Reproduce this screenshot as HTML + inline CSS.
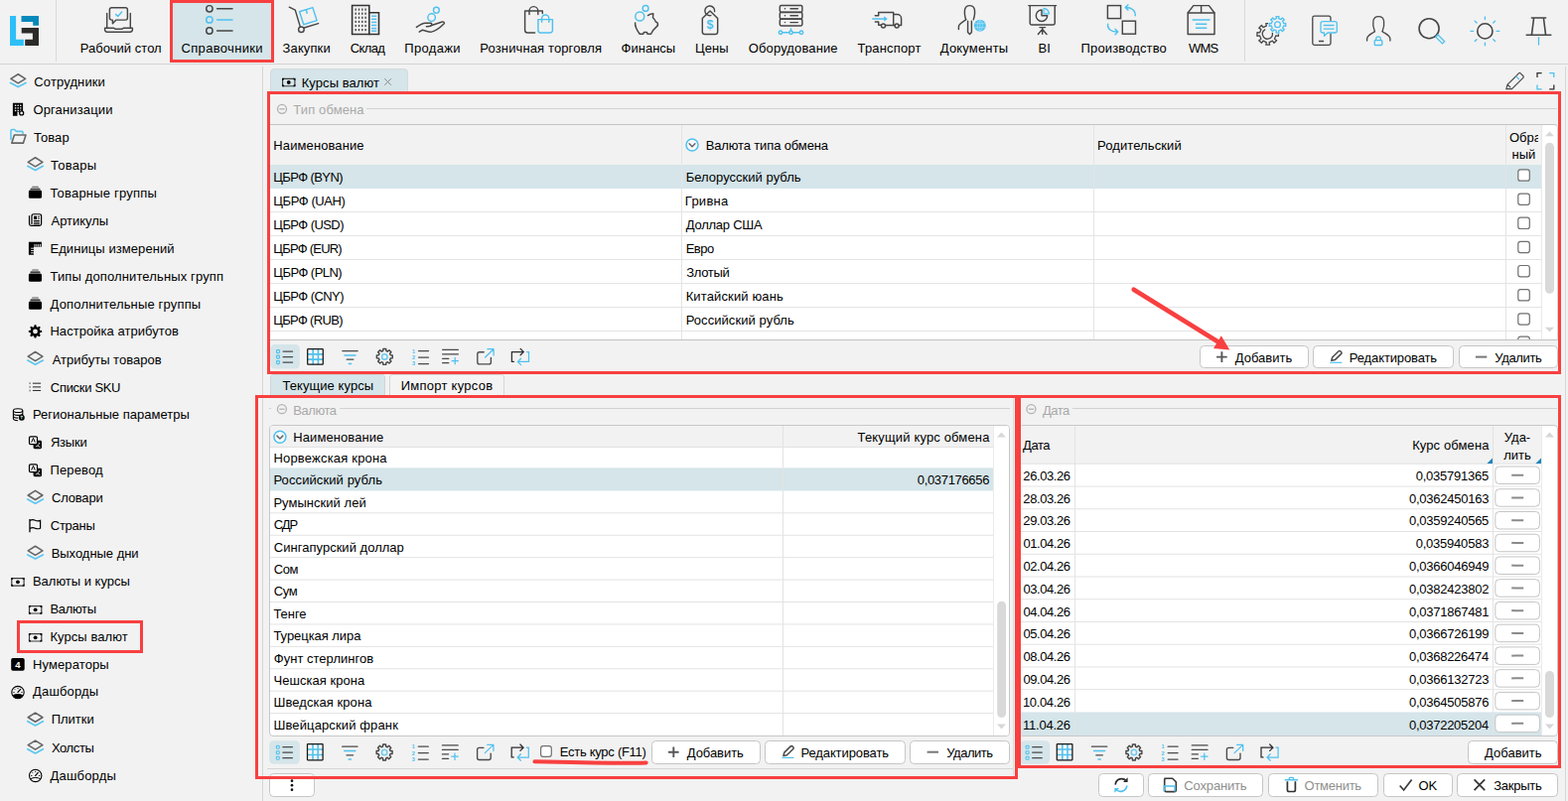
<!DOCTYPE html>
<html lang="ru"><head><meta charset="utf-8"><title>Курсы валют</title>
<style>
html,body{margin:0;padding:0}
body{width:1579px;height:807px;background:#f2f2f2;position:relative;overflow:hidden;font:13px/16px "Liberation Sans","DejaVu Sans",sans-serif;color:#000}
div,svg{position:absolute;box-sizing:border-box}
.w{position:absolute;left:0;top:0;width:0;height:0;margin:0;padding:0;display:block}
svg{overflow:visible}
.t{white-space:nowrap}
.g{color:#a9a9a9}
.dis{color:#8f8f8f}
.btn{background:#fff;border:1px solid #c6c6c6;border-radius:4.5px}
.red{border:3px solid #f84040}
.hl{background:#d5e5ea}
.ov{left:0;top:0;pointer-events:none}
</style></head>
<body>
<!-- top bar -->
<header class="w">
<div style="left:0px;top:64px;width:1579px;height:1px;background:#d3d3d3"></div><div style="left:56px;top:0px;width:1px;height:62px;background:#dadada"></div><div style="left:1253px;top:0px;width:1px;height:62px;background:#dadada"></div><div class="red hl" style="left:171px;top:0px;width:105px;height:63px;"></div><div class="t" style="left:80.83px;top:40.8px;letter-spacing:0.024px;">Рабочий стол</div>
<div class="t" style="left:182.54px;top:40.8px;letter-spacing:0.321px;">Справочники</div>
<div class="t" style="left:284.57px;top:40.8px;letter-spacing:0.120px;">Закупки</div>
<div class="t" style="left:352.74px;top:40.8px;letter-spacing:-0.635px;">Склад</div>
<div class="t" style="left:407.35px;top:40.8px;letter-spacing:0.327px;">Продажи</div>
<div class="t" style="left:483.33px;top:40.8px;letter-spacing:0.121px;">Розничная торговля</div>
<div class="t" style="left:625.55px;top:40.8px;letter-spacing:0.012px;">Финансы</div>
<div class="t" style="left:699.93px;top:40.8px;letter-spacing:0.133px;">Цены</div>
<div class="t" style="left:753.78px;top:40.8px;letter-spacing:0.125px;">Оборудование</div>
<div class="t" style="left:863.51px;top:40.8px;letter-spacing:0.175px;">Транспорт</div>
<div class="t" style="left:946.80px;top:40.8px;letter-spacing:0.161px;">Документы</div>
<div class="t" style="left:1045.53px;top:40.8px;">BI</div>
<div class="t" style="left:1088.55px;top:40.8px;letter-spacing:0.140px;">Производство</div>
<div class="t" style="left:1196.94px;top:40.8px;letter-spacing:-0.808px;">WMS</div>
<svg class="ov" width="1579" height="66" viewBox="0 0 1579 66"><path d="M10 16h6.100v23.800h7.800v6.200H10z" fill="#2ebff8"/><path d="M21.500 16H39v9.800h-5.800v-3.700H21.500z" fill="#0789bc"/><path d="M21.700 28H39v18H25.200v-6.200h7.700v-6.200H21.700z" fill="#2c2b29"/><g fill="none" stroke="#464646" stroke-width="1.45" stroke-linecap="round" stroke-linejoin="round"><path d="M107.7 13.5v14.3M131.3 13.5v14.3"/><path d="M105.6 28.2h8.8l1.6 1h7l1.6-1h8.8v1.6a2.4 2.4 0 0 1-2.4 2.4h-23a2.4 2.4 0 0 1-2.4-2.4z"/><path d="M112.4 7.8h14a2 2 0 0 1 2 2v8.3a2 2 0 0 1-2 2h-9.4l-3.6 3.6v-3.6h-1a2 2 0 0 1-2-2v-8.3a2 2 0 0 1 2-2z"/></g><g fill="none" stroke="#4fc1ee" stroke-width="1.45" stroke-linecap="round" stroke-linejoin="round"><path d="M116.6 14.4l2.1 2.1 4-4.4"/></g><g fill="none" stroke="#464646" stroke-width="1.45" stroke-linecap="round" stroke-linejoin="round"><circle cx="210.9" cy="8.8" r="3.2"/><path d="M218.6 8.8h15.4"/><circle cx="210.9" cy="31" r="3.2"/><path d="M218.6 31h15.4"/></g><g fill="none" stroke="#4fc1ee" stroke-width="1.45" stroke-linecap="round" stroke-linejoin="round"><circle cx="210.9" cy="19.9" r="3.2"/><path d="M218.6 19.9h15.4"/></g><g fill="none" stroke="#464646" stroke-width="1.45" stroke-linecap="round" stroke-linejoin="round"><path d="M291.3 7.2l6 2.9 5 16.8"/><circle cx="303.4" cy="29.7" r="2.8"/><path d="M306.2 28l14.4-4.4"/></g><g fill="none" stroke="#4fc1ee" stroke-width="1.45" stroke-linecap="round" stroke-linejoin="round"><path d="M301.6 11.8l13.3-4.2 4.2 13-13.3 4.2z"/><path d="M308.2 9.7l1 3.6"/></g><g fill="none" stroke="#333" stroke-width="1.6" stroke-linecap="round" stroke-linejoin="miter"><path d="M354.6 5.5h17.2v29h-17.2z"/><path d="M371.8 12.8h9.7v21.7h-9.7"/></g><g fill="#464646"><rect x="357.5" y="8.5" width="1.4" height="2.2"/><rect x="357.5" y="12.6" width="1.4" height="2.2"/><rect x="357.5" y="16.7" width="1.4" height="2.2"/><rect x="357.5" y="20.8" width="1.4" height="2.2"/><rect x="357.5" y="24.9" width="1.4" height="2.2"/><rect x="357.5" y="29" width="1.4" height="2.2"/><rect x="360.8" y="8.5" width="1.4" height="2.2"/><rect x="360.8" y="12.6" width="1.4" height="2.2"/><rect x="360.8" y="16.7" width="1.4" height="2.2"/><rect x="360.8" y="20.8" width="1.4" height="2.2"/><rect x="360.8" y="24.9" width="1.4" height="2.2"/><rect x="360.8" y="29" width="1.4" height="2.2"/><rect x="364.1" y="8.5" width="1.4" height="2.2"/><rect x="364.1" y="12.6" width="1.4" height="2.2"/><rect x="364.1" y="16.7" width="1.4" height="2.2"/><rect x="364.1" y="20.8" width="1.4" height="2.2"/><rect x="364.1" y="24.9" width="1.4" height="2.2"/><rect x="364.1" y="29" width="1.4" height="2.2"/><rect x="367.4" y="8.5" width="1.4" height="2.2"/><rect x="367.4" y="12.6" width="1.4" height="2.2"/><rect x="367.4" y="16.7" width="1.4" height="2.2"/><rect x="367.4" y="20.8" width="1.4" height="2.2"/><rect x="367.4" y="24.9" width="1.4" height="2.2"/><rect x="367.4" y="29" width="1.4" height="2.2"/></g><g fill="none" stroke="#4fc1ee" stroke-width="1.45" stroke-linecap="butt" stroke-linejoin="round"><path d="M374 16.2h5.2"/><path d="M374 19.3h5.2"/><path d="M374 22.4h5.2"/><path d="M374 25.5h5.2"/><path d="M374 28.6h5.2"/><path d="M374 31.2h5.2"/></g><g fill="none" stroke="#4fc1ee" stroke-width="1.45" stroke-linecap="round" stroke-linejoin="round"><circle cx="439.4" cy="10.2" r="2.9"/><circle cx="434.6" cy="17.6" r="3.8"/></g><g fill="none" stroke="#464646" stroke-width="1.45" stroke-linecap="round" stroke-linejoin="round"><path d="M419.4 27.4c3.5-2.5 6.3-4.2 9-4.2h5.3c1.4 0 1.6 2.2 0 2.9-1 .5-3 .6-4.3 .7"/><path d="M434 25.8l11.3-3.8c1.5-.5 2.8 1 1.700 2.100-3.500 3.500-9 7.300-12.500 8-2.500 .5-6.500-1.500-9.500-1.800l-2.800 1.900"/></g><g fill="none" stroke="#464646" stroke-width="1.45" stroke-linecap="round" stroke-linejoin="round"><path d="M538.6 33h-7.200a2.800 2.800 0 0 1-2.800-2.800v-19.200h17.700v2.500"/><path d="M533 14.400v-3.400a4.400 4.400 0 0 1 8.800 0v3.400"/></g><g fill="none" stroke="#4fc1ee" stroke-width="1.45" stroke-linecap="round" stroke-linejoin="round"><path d="M541.900 19.600h14.500v11a2.400 2.400 0 0 1-2.400 2.400h-9.700a2.400 2.400 0 0 1-2.400-2.400z"/><path d="M545.600 22.200v-3.600a3.600 3.600 0 0 1 7.200 0v3.600"/></g><g fill="none" stroke="#4fc1ee" stroke-width="1.45" stroke-linecap="round" stroke-linejoin="round"><circle cx="650.1" cy="8.400" r="2.900"/><circle cx="644.300" cy="16.500" r="4.500"/></g><g fill="none" stroke="#464646" stroke-width="1.45" stroke-linecap="round" stroke-linejoin="round"><path d="M639.600 23c-.3 4 1.800 7.500 4.600 11.300h3.600l.6-1.700h3l.6 1.700h3.600c1.200-2.600 2.800-5.200 5.600-7.400 1.200-.8 1.400-2.800 .8-4.200l-1.600-.6c-.6-1.600-1.600-3.200-2.900-4.400l.3-4-2.700 .4-2.700 1.500"/></g><g fill="none" stroke="#464646" stroke-width="1.45" stroke-linecap="round" stroke-linejoin="round"><path d="M707.300 18.500l7.700-7.600 7.700 7.600v13.400a2.600 2.600 0 0 1-2.600 2.600h-10.200a2.600 2.600 0 0 1-2.600-2.600z"/><path d="M715.800 15.600a4.900 4.900 0 1 1 3.800-4"/></g><text x="715" y="29.300" font-family="Liberation Sans, sans-serif" font-size="12.500" font-weight="bold" fill="#4fc1ee" text-anchor="middle">$</text><g fill="none" stroke="#464646" stroke-width="1.45" stroke-linecap="round" stroke-linejoin="round"><rect x="785.300" y="5.5" width="22.600" height="6.600" rx="1.400"/><path d="M790.400 8.8h.2M796 8.8h7.400"/><rect x="785.300" y="12.4" width="22.600" height="6.600" rx="1.400"/><path d="M790.400 15.7h.2M796 15.7h7.400"/><rect x="785.300" y="19.3" width="22.600" height="6.600" rx="1.400"/><path d="M790.400 22.6h.2M796 22.6h7.400"/></g><g fill="none" stroke="#4fc1ee" stroke-width="1.45" stroke-linecap="round" stroke-linejoin="round"><path d="M787.700 32.800h7.100M798.200 32.800h7.100M796.500 29v2"/><circle cx="786" cy="32.800" r="1.700"/><circle cx="796.500" cy="32.800" r="1.700"/><circle cx="807" cy="32.800" r="1.700"/></g><g fill="none" stroke="#464646" stroke-width="1.45" stroke-linecap="round" stroke-linejoin="round"><path d="M881.300 15.700h3.400v-3.300h15v12.800M881.300 22h3.400v3.200h2.600M891.600 25.500h9.300M905.200 25.500h2.400v-7a4 4 0 0 0-4-4h-3.900"/><circle cx="889.500" cy="26" r="2"/><circle cx="903.100" cy="26" r="2"/></g><path d="M878.200 18.300h12v-2.100l3.600 2.800-3.600 2.800v-2.100h-12z" fill="#4fc1ee"/><g fill="none" stroke="#464646" stroke-width="1.45" stroke-linecap="round" stroke-linejoin="round"><path d="M972.700 19.800c-1.300-4-1.600-8-1-10.600a5 5 0 0 1 9.600 0c.6 2.600 .3 6.600-1 10.600"/><path d="M972.700 19.800c-2.600 2-7.300 4-7.300 7v2.700"/><path d="M974.600 21.200v11.300l1.900 2 1.900-2v-11.300"/></g><circle cx="986.800" cy="25.700" r="6" fill="#4fc1ee"/><g stroke="#bfe6f7" stroke-width=".6" fill="none"><ellipse cx="986.800" cy="25.700" rx="2.600" ry="5.400"/><path d="M981.300 23.700h11M981.300 27.700h11M986.800 20v11.400"/></g><g fill="none" stroke="#464646" stroke-width="1.45" stroke-linecap="round" stroke-linejoin="round"><path d="M1035.800 5.600h27.800"/><path d="M1037.200 5.600v18a1.400 1.400 0 0 0 1.400 1.400h22.200a1.400 1.400 0 0 0 1.400-1.400v-18"/><path d="M1047 27.600h5.500M1049.700 27.600v6.700M1049.700 29.500l-4.300 4.900M1049.700 29.500l4.300 4.900"/><path d="M1049 10a5.700 5.700 0 1 0 5.700 5.700h-5.700z"/></g><path d="M1051 8.300a5.700 5.700 0 0 1 5.500 5.500h-5.500z" fill="#d9eef8" stroke="#4fc1ee" stroke-width="1.200" stroke-linejoin="round"/><g fill="none" stroke="#464646" stroke-width="1.45" stroke-linecap="round" stroke-linejoin="miter"><rect x="1115.400" y="5.600" width="13.200" height="13"/><rect x="1130.300" y="21.200" width="13.200" height="13"/></g><g fill="none" stroke="#4fc1ee" stroke-width="1.45" stroke-linecap="round" stroke-linejoin="round"><path d="M1143.200 15.800c.4-5.200-3.400-8.300-9.600-8.300M1136 4.900l-2.800 2.600 2.800 2.600"/><path d="M1115.600 24.200c-.4 5 3 7.800 9.600 7.800M1123 29.300l2.800 2.700-2.800 2.700"/></g><g fill="none" stroke="#464646" stroke-width="1.45" stroke-linecap="round" stroke-linejoin="round"><path d="M1196.200 13v21.400h26.800V13l-5.600-7.400h-15.600z"/><path d="M1196.200 13h26.800M1209.600 5.600v7.400"/></g><g fill="none" stroke="#4fc1ee" stroke-width="1.45" stroke-linecap="butt" stroke-linejoin="round"><path d="M1200.600 20h18M1204 24.200h11.300M1204 28.200h11.300"/></g><g fill="none" stroke="#464646" stroke-width="1.3" stroke-linecap="round" stroke-linejoin="round"><path d="M1287.44 32.53L1287.44 36.27L1284.88 35.83L1283.49 39.17L1285.62 40.67L1282.97 43.32L1281.47 41.19L1278.13 42.58L1278.57 45.14L1274.83 45.14L1275.27 42.58L1271.93 41.19L1270.43 43.32L1267.78 40.67L1269.91 39.17L1268.52 35.83L1265.96 36.27L1265.96 32.53L1268.52 32.97L1269.91 29.63L1267.78 28.13L1270.43 25.48L1271.93 27.61L1275.27 26.22L1274.83 23.66L1278.57 23.66L1278.13 26.22L1281.47 27.61L1282.97 25.48L1285.62 28.13L1283.49 29.63L1284.88 32.97z"/><path d="M1273.700 29.900a5 5 0 1 0 7.600 3.300"/></g><circle cx="1286.500" cy="24.800" r="9.600" fill="#f2f2f2"/><g fill="none" stroke="#4fc1ee" stroke-width="1.3" stroke-linecap="round" stroke-linejoin="round"><path d="M1294.77 23.36L1294.77 26.24L1292.71 25.88L1291.65 28.42L1293.37 29.63L1291.33 31.67L1290.12 29.95L1287.58 31.01L1287.94 33.07L1285.06 33.07L1285.42 31.01L1282.88 29.95L1281.67 31.67L1279.63 29.63L1281.35 28.42L1280.29 25.88L1278.23 26.24L1278.23 23.36L1280.29 23.72L1281.35 21.18L1279.63 19.97L1281.67 17.93L1282.88 19.65L1285.42 18.59L1285.06 16.53L1287.94 16.53L1287.58 18.59L1290.12 19.65L1291.33 17.93L1293.37 19.97L1291.65 21.18L1292.71 23.72z"/><circle cx="1286.500" cy="24.800" r="2.900"/></g><g fill="none" stroke="#464646" stroke-width="1.3" stroke-linecap="round" stroke-linejoin="round"><path d="M1340 20.500v-2.500a1.800 1.800 0 0 0-1.800-1.800h-14.600a1.800 1.800 0 0 0-1.800 1.800v25.600a1.800 1.800 0 0 0 1.800 1.800h14.600a1.800 1.800 0 0 0 1.800-1.800v-9.500"/><path d="M1328.400 41.500h4.200"/></g><g fill="none" stroke="#4fc1ee" stroke-width="1.3" stroke-linecap="round" stroke-linejoin="round"><path d="M1332 21.600h12.300a2 2 0 0 1 2 2v7.400a2 2 0 0 1-2 2h-7.300l-3.500 3.200v-3.200h-1.500a2 2 0 0 1-2-2v-7.400a2 2 0 0 1 2-2z"/><path d="M1333.200 25.500h9.900M1333.200 29.200h9.900"/></g><g fill="none" stroke="#464646" stroke-width="1.3" stroke-linecap="round" stroke-linejoin="round"><path d="M1384.400 31.700c-1.500-3.500-2-7.500-1.500-10.500a5.400 5.400 0 0 1 10.700 0c.5 3-.1 7-1.500 10.500"/><path d="M1384.400 31.700c-2.500 2-7.800 3.700-7.800 7.300v2M1392.100 31.700c2.500 2 7.800 3.700 7.800 7.300v2"/></g><g fill="none" stroke="#4fc1ee" stroke-width="1.3" stroke-linecap="round" stroke-linejoin="round"><rect x="1384.200" y="40.600" width="7.600" height="4.900" rx=".8"/><path d="M1385.700 40.600v-1.400a2.300 2.300 0 0 1 4.600 0v1.400"/></g><g fill="none" stroke="#464646" stroke-width="1.3" stroke-linecap="round" stroke-linejoin="round"><circle cx="1439.100" cy="28.700" r="10" stroke-width="1.600"/></g><g fill="none" stroke="#4fc1ee" stroke-width="1.3" stroke-linecap="round" stroke-linejoin="miter"><path d="M1445.800 37.200l2.200-2.200 6.700 6.700-2.200 2.200z"/></g><g fill="none" stroke="#464646" stroke-width="1.3" stroke-linecap="round" stroke-linejoin="round"><circle cx="1495.400" cy="31.400" r="7.600" stroke-width="1.600"/></g><g fill="none" stroke="#4fc1ee" stroke-width="1.3" stroke-linecap="round" stroke-linejoin="round"><path d="M1507.20 31.40L1509.80 31.40"/><path d="M1503.74 39.74L1505.58 41.58"/><path d="M1495.40 43.20L1495.40 45.80"/><path d="M1487.06 39.74L1485.22 41.58"/><path d="M1483.60 31.40L1481.00 31.40"/><path d="M1487.06 23.06L1485.22 21.22"/><path d="M1495.40 19.60L1495.40 17.00"/><path d="M1503.74 23.06L1505.58 21.22"/></g><g fill="none" stroke="#464646" stroke-width="1.3" stroke-linecap="round" stroke-linejoin="round"><path d="M1542.400 18h14.200M1544.600 18l-2.200 17.300M1554.400 18l2.200 17.300M1537.200 35.300h24.600" stroke-width="1.600"/></g><g fill="none" stroke="#4fc1ee" stroke-width="1.3" stroke-linecap="round" stroke-linejoin="round"><path d="M1549.500 37.700v7.300"/></g></svg>
</header>
<!-- sidebar -->
<aside class="w">
<div style="left:264px;top:67px;width:1px;height:740px;background:#d6d6d6"></div><div class="t" style="left:34.34px;top:75.1px;letter-spacing:0.127px;">Сотрудники</div>
<div class="t" style="left:33.38px;top:103.07px;letter-spacing:0.149px;">Организации</div>
<div class="t" style="left:33.91px;top:131.04px;letter-spacing:0.091px;">Товар</div>
<div class="t" style="left:51.11px;top:159.01px;letter-spacing:0.255px;">Товары</div>
<div class="t" style="left:50.41px;top:186.98px;letter-spacing:0.215px;">Товарные группы</div>
<div class="t" style="left:51.47px;top:214.95px;letter-spacing:-0.012px;">Артикулы</div>
<div class="t" style="left:50.43px;top:242.92px;letter-spacing:0.078px;">Единицы измерений</div>
<div class="t" style="left:50.41px;top:270.89px;letter-spacing:0.131px;">Типы дополнительных групп</div>
<div class="t" style="left:50.60px;top:298.86px;letter-spacing:0.166px;">Дополнительные группы</div>
<div class="t" style="left:50.43px;top:325.83px;letter-spacing:0.046px;">Настройка атрибутов</div>
<div class="t" style="left:52.67px;top:354.8px;letter-spacing:0.006px;">Атрибуты товаров</div>
<div class="t" style="left:50.84px;top:382.77px;letter-spacing:-0.313px;">Списки SKU</div>
<div class="t" style="left:32.93px;top:409.74px;letter-spacing:0.009px;">Региональные параметры</div>
<div class="t" style="left:50.89px;top:437.71px;letter-spacing:-0.208px;">Языки</div>
<div class="t" style="left:50.45px;top:465.68px;letter-spacing:0.142px;">Перевод</div>
<div class="t" style="left:52.04px;top:493.65px;letter-spacing:-0.195px;">Словари</div>
<div class="t" style="left:50.84px;top:521.62px;letter-spacing:-0.273px;">Страны</div>
<div class="t" style="left:51.63px;top:549.59px;letter-spacing:-0.029px;">Выходные дни</div>
<div class="t" style="left:32.93px;top:577.56px;letter-spacing:-0.010px;">Валюты и курсы</div>
<div class="t" style="left:50.43px;top:605.53px;letter-spacing:-0.316px;">Валюты</div>
<div class="t" style="left:50.43px;top:633.5px;letter-spacing:0.058px;">Курсы валют</div>
<div class="t" style="left:32.93px;top:662.47px;letter-spacing:0.119px;">Нумераторы</div>
<div class="t" style="left:33.10px;top:689.44px;letter-spacing:0.142px;">Дашборды</div>
<div class="t" style="left:51.65px;top:717.41px;letter-spacing:0.012px;">Плитки</div>
<div class="t" style="left:51.91px;top:746.38px;letter-spacing:-0.392px;">Холсты</div>
<div class="t" style="left:50.60px;top:774.35px;letter-spacing:0.171px;">Дашборды</div>
<svg class="ov" width="264" height="807" viewBox="0 0 264 807"><path d="M10.5 83.4L18.25 87.60000000000001L26.0 83.4" fill="none" stroke="#5cc6f0" stroke-width="1.700" stroke-linejoin="round" stroke-linecap="round"/><path d="M10.9 79.4L18.25 74.8L25.6 79.4L18.25 83.9z" fill="none" stroke="#666" stroke-width="1.600" stroke-linejoin="round"/><path d="M12.9 103.87h10.200v9h-5.600v3.800h-4.600z" fill="#000"/><rect x="14.9" y="105.57000000000001" width="1.400" height="1.400" fill="#f2f2f2"/><rect x="14.9" y="108.17" width="1.400" height="1.400" fill="#f2f2f2"/><rect x="14.9" y="110.77000000000001" width="1.400" height="1.400" fill="#f2f2f2"/><rect x="17.5" y="105.57000000000001" width="1.400" height="1.400" fill="#f2f2f2"/><rect x="17.5" y="108.17" width="1.400" height="1.400" fill="#f2f2f2"/><rect x="17.5" y="110.77000000000001" width="1.400" height="1.400" fill="#f2f2f2"/><rect x="20.1" y="105.57000000000001" width="1.400" height="1.400" fill="#f2f2f2"/><rect x="20.1" y="108.17" width="1.400" height="1.400" fill="#f2f2f2"/><rect x="20.1" y="110.77000000000001" width="1.400" height="1.400" fill="#f2f2f2"/><circle cx="21.700000000000003" cy="113.97" r="2" fill="#f2f2f2" stroke="#000" stroke-width="1.300"/><path d="M11 140.44000000000003v-9a1 1 0 0 1 1-1h2.600l1.800 1.900h5.600a1 1 0 0 1 1 1v1.200" fill="none" stroke="#5cc6f0" stroke-width="1.600" stroke-linejoin="round" stroke-linecap="round"/><path d="M14.4 135.94000000000003h11.600l-2.600 8.200h-11.600z" fill="none" stroke="#666" stroke-width="1.600" stroke-linejoin="round"/><path d="M27.8 167.30999999999997L35.55 171.51L43.3 167.30999999999997" fill="none" stroke="#5cc6f0" stroke-width="1.700" stroke-linejoin="round" stroke-linecap="round"/><path d="M28.2 163.30999999999997L35.55 158.70999999999998L42.9 163.30999999999997L35.55 167.80999999999997z" fill="none" stroke="#666" stroke-width="1.600" stroke-linejoin="round"/><rect x="32.1" y="187.68" width="6.800" height="1" rx=".5" fill="#555"/><rect x="30.5" y="189.68" width="10" height="1.100" rx=".5" fill="#000"/><rect x="28.9" y="191.58" width="13.100" height="8.200" rx="1.500" fill="#000"/><path d="M29.5 217.35v8.200a1.800 1.800 0 0 0 1.800 1.800h8.500a1.800 1.800 0 0 0 1.800-1.800v-8a1.800 1.800 0 0 0-1.800-1.800h-6a1.800 1.800 0 0 0-1.800 1.800v8.500" fill="none" stroke="#000" stroke-width="1.200"/><rect x="34.1" y="217.65" width="3" height="3.400" fill="#000"/><path d="M38.2 218.15h1.700M38.2 220.15h1.700M33.9 222.45h6M33.9 224.15h6M33.9 225.85h6" stroke="#000" stroke-width="1" fill="none"/><path d="M28.9 243.72h13v5h-8v8h-5z" fill="#000"/><rect x="34.5" y="245.92" width=".9" height="2.800" fill="#f2f2f2"/><rect x="36.4" y="245.92" width=".9" height="2.800" fill="#f2f2f2"/><rect x="38.3" y="245.92" width=".9" height="2.800" fill="#f2f2f2"/><rect x="40.2" y="245.92" width=".9" height="2.800" fill="#f2f2f2"/><rect x="31.099999999999998" y="249.72" width="2.800" height=".9" fill="#f2f2f2"/><rect x="31.099999999999998" y="252.02" width="2.800" height=".9" fill="#f2f2f2"/><rect x="31.099999999999998" y="254.32" width="2.800" height=".9" fill="#f2f2f2"/><rect x="32.1" y="271.5899999999999" width="6.800" height="1" rx=".5" fill="#555"/><rect x="30.5" y="273.5899999999999" width="10" height="1.100" rx=".5" fill="#000"/><rect x="28.9" y="275.48999999999995" width="13.100" height="8.200" rx="1.500" fill="#000"/><rect x="32.1" y="299.55999999999995" width="6.800" height="1" rx=".5" fill="#555"/><rect x="30.5" y="301.55999999999995" width="10" height="1.100" rx=".5" fill="#000"/><rect x="28.9" y="303.46" width="13.100" height="8.200" rx="1.500" fill="#000"/><path d="M34.66 327.28L36.34 327.28L36.79 329.20L37.93 329.67L39.61 328.64L40.79 329.82L39.76 331.50L40.23 332.64L42.15 333.09L42.15 334.77L40.23 335.22L39.76 336.36L40.79 338.04L39.61 339.22L37.93 338.19L36.79 338.66L36.34 340.58L34.66 340.58L34.21 338.66L33.07 338.19L31.39 339.22L30.21 338.04L31.24 336.36L30.77 335.22L28.85 334.77L28.85 333.09L30.77 332.64L31.24 331.50L30.21 329.82L31.39 328.64L33.07 329.67L34.21 329.20z M37.9 333.92999999999995a2.400 2.400 0 1 0 -4.800 0a2.400 2.400 0 1 0 4.800 0z" fill="#000" fill-rule="evenodd"/><path d="M27.8 363.09999999999997L35.55 367.29999999999995L43.3 363.09999999999997" fill="none" stroke="#5cc6f0" stroke-width="1.700" stroke-linejoin="round" stroke-linecap="round"/><path d="M28.2 359.09999999999997L35.55 354.5L42.9 359.09999999999997L35.55 363.59999999999997z" fill="none" stroke="#666" stroke-width="1.600" stroke-linejoin="round"/><path d="M32.9 386.16999999999996h8.200" stroke="#333" stroke-width="1.100"/><rect x="29.599999999999998" y="385.27" width="1" height="1.800" fill="#555"/><path d="M32.9 389.86999999999995h8.200" stroke="#333" stroke-width="1.100"/><rect x="29.599999999999998" y="388.96999999999997" width="1" height="1.800" fill="#555"/><path d="M32.9 393.46999999999997h8.200" stroke="#333" stroke-width="1.100"/><rect x="29.599999999999998" y="392.57" width="1" height="1.800" fill="#555"/><ellipse cx="18.1" cy="413.63999999999993" rx="4.700" ry="1.900" fill="none" stroke="#000" stroke-width="1.100"/><path d="M13.4 413.63999999999993v8.200c0 1 2 1.900 4.700 1.900M22.8 413.63999999999993v4.500M13.4 416.43999999999994c0 1 2 1.900 4.700 1.900s4.700-.9 4.700-1.900M13.4 419.23999999999995c0 1 2 1.900 4.700 1.900" fill="none" stroke="#000" stroke-width="1.100"/><circle cx="21.8" cy="420.73999999999995" r="3" fill="#000"/><path d="M21.8 419.03999999999996v3.200M20.5 420.13999999999993l1.300-1.300 1.300 1.300" stroke="#cfe" stroke-width=".8" fill="none"/><rect x="33.6" y="443.81" width="8.400" height="8.400" rx="1.400" fill="#000"/><rect x="29.5" y="439.81" width="8" height="7.800" rx="1.300" fill="#f2f2f2" stroke="#000" stroke-width="1.200"/><path d="M31.7 445.71l1.800-4.300 1.800 4.300" fill="none" stroke="#000" stroke-width="1"/><path d="M35.9 450.01c2-.6 3.200-2 3.800-4M37.9 449.01l2.600 1.600" fill="none" stroke="#f2f2f2" stroke-width=".9"/><rect x="33.6" y="471.78" width="8.400" height="8.400" rx="1.400" fill="#000"/><rect x="29.5" y="467.78" width="8" height="7.800" rx="1.300" fill="#f2f2f2" stroke="#000" stroke-width="1.200"/><path d="M31.7 473.67999999999995l1.800-4.300 1.800 4.300" fill="none" stroke="#000" stroke-width="1"/><path d="M35.9 477.97999999999996c2-.6 3.200-2 3.800-4M37.9 476.97999999999996l2.600 1.600" fill="none" stroke="#f2f2f2" stroke-width=".9"/><path d="M27.8 502.94999999999993L35.55 507.1499999999999L43.3 502.94999999999993" fill="none" stroke="#5cc6f0" stroke-width="1.700" stroke-linejoin="round" stroke-linecap="round"/><path d="M28.2 498.94999999999993L35.55 494.34999999999997L42.9 498.94999999999993L35.55 503.44999999999993z" fill="none" stroke="#666" stroke-width="1.600" stroke-linejoin="round"/><path d="M30.0 523.1199999999999v13.100" stroke="#000" stroke-width="1.300" fill="none"/><path d="M30.0 524.4199999999998c2.400-1.100 3.800-.9 5.400-.2s3 .9 5.200 .1v7.900c-2.200 .9-3.600 .7-5.200 0s-3-.9-5.400 .2" stroke="#000" stroke-width="1.200" fill="none"/><path d="M27.8 558.89L35.55 563.0899999999999L43.3 558.89" fill="none" stroke="#5cc6f0" stroke-width="1.700" stroke-linejoin="round" stroke-linecap="round"/><path d="M28.2 554.89L35.55 550.29L42.9 554.89L35.55 559.39z" fill="none" stroke="#666" stroke-width="1.600" stroke-linejoin="round"/><rect x="11.8" y="582.66" width="12.3" height="7.3999999999999995" rx="1.300" fill="none" stroke="#3c3c3c" stroke-width="1.150"/><path d="M11.200000000000001 582.06h2.2a2.2 2.2 0 0 1 -2.2 2.2zM24.700000000000003 582.06v2.2a2.2 2.2 0 0 1 -2.2 -2.2zM24.700000000000003 590.66h-2.2a2.2 2.2 0 0 1 2.2 -2.2zM11.200000000000001 590.66v-2.2a2.2 2.2 0 0 1 2.2 2.2z" fill="#000"/><circle cx="17.950000000000003" cy="586.3599999999999" r="1.900" fill="#000"/><rect x="29.5" y="610.6299999999999" width="12.3" height="7.3999999999999995" rx="1.300" fill="none" stroke="#3c3c3c" stroke-width="1.150"/><path d="M28.9 610.0299999999999h2.2a2.2 2.2 0 0 1 -2.2 2.2zM42.4 610.0299999999999v2.2a2.2 2.2 0 0 1 -2.2 -2.2zM42.4 618.6299999999999h-2.2a2.2 2.2 0 0 1 2.2 -2.2zM28.9 618.6299999999999v-2.2a2.2 2.2 0 0 1 2.2 2.2z" fill="#000"/><circle cx="35.65" cy="614.3299999999998" r="1.900" fill="#000"/><rect x="29.5" y="638.5999999999999" width="12.3" height="7.3999999999999995" rx="1.300" fill="none" stroke="#3c3c3c" stroke-width="1.150"/><path d="M28.9 637.9999999999999h2.2a2.2 2.2 0 0 1 -2.2 2.2zM42.4 637.9999999999999v2.2a2.2 2.2 0 0 1 -2.2 -2.2zM42.4 646.5999999999999h-2.2a2.2 2.2 0 0 1 2.2 -2.2zM28.9 646.5999999999999v-2.2a2.2 2.2 0 0 1 2.2 2.2z" fill="#000"/><circle cx="35.65" cy="642.2999999999998" r="1.900" fill="#000"/><rect x="11.200000000000001" y="663.0699999999999" width="13.500" height="12.800" rx="1.800" fill="#000"/><text x="17.8" y="672.9699999999999" font-family="Liberation Sans, sans-serif" font-size="9.500" font-weight="bold" fill="#fff" text-anchor="middle">4</text><circle cx="18.0" cy="697.5399999999998" r="6.200" fill="none" stroke="#000" stroke-width="1.100"/><path d="M12.4 700.4399999999998c3.500-1.900 7.700-1.900 11.200 0a6.200 6.200 0 0 1-11.200 0z" fill="#000"/><path d="M17.6 697.9399999999998l3.300-3.800" stroke="#000" stroke-width="1.200" fill="none"/><path d="M13.4 697.5399999999998h1.300M21.3 697.5399999999998h1.300M18.0 692.9399999999998v1.200M14.8 694.3399999999998l.8 .8" stroke="#000" stroke-width=".9" fill="none"/><path d="M27.8 726.7099999999999L35.55 730.9099999999999L43.3 726.7099999999999" fill="none" stroke="#5cc6f0" stroke-width="1.700" stroke-linejoin="round" stroke-linecap="round"/><path d="M28.2 722.7099999999999L35.55 718.1099999999999L42.9 722.7099999999999L35.55 727.2099999999999z" fill="none" stroke="#666" stroke-width="1.600" stroke-linejoin="round"/><path d="M27.8 754.68L35.55 758.8799999999999L43.3 754.68" fill="none" stroke="#5cc6f0" stroke-width="1.700" stroke-linejoin="round" stroke-linecap="round"/><path d="M28.2 750.68L35.55 746.0799999999999L42.9 750.68L35.55 755.18z" fill="none" stroke="#666" stroke-width="1.600" stroke-linejoin="round"/><circle cx="35.699999999999996" cy="781.4499999999999" r="6.200" fill="none" stroke="#000" stroke-width="1.100"/><path d="M30.499999999999996 784.7499999999999c3.400-1.700 7-1.700 10.400 0" fill="none" stroke="#000" stroke-width="1"/><path d="M35.3 781.8499999999999l3.300-3.800" stroke="#000" stroke-width="1.200" fill="none"/><path d="M31.099999999999994 781.4499999999999h1.300M38.99999999999999 781.4499999999999h1.300M35.699999999999996 776.8499999999999v1.200M32.49999999999999 778.2499999999999l.8 .8" stroke="#000" stroke-width=".9" fill="none"/></svg>
<div class="red" style="left:17px;top:625px;width:127px;height:33px;"></div></aside>
<!-- main -->
<main class="w">
<div style="left:1576px;top:67px;width:1px;height:740px;background:#d6d6d6"></div><div class="hl" style="left:272px;top:69px;width:139px;height:26px;border:1px solid #d4dadc;border-radius:4px 4px 0 0"></div><div class="t" style="left:303.73px;top:75.5px;letter-spacing:0.068px;">Курсы валют</div><div style="left:369px;top:109px;width:1199px;height:1px;background:#d2d2d2"></div><div class="t g" style="left:295.31px;top:103.3px;letter-spacing:0.116px;">Тип обмена</div><div style="left:272px;top:125px;width:1297px;height:218px;background:#fff;border-top:1px solid #c4c4c4;border-bottom:1px solid #c1c1c1;border-right:1px solid #d4d4d4;border-radius:0 4px 0 0;overflow:hidden"><div style="left:0;top:0;width:1280px;height:39.500px;background:#f2f2f2"></div><div style="left:0;top:39.500px;width:1280px;height:24px;background:#d5e5ea"></div><div style="left:0;top:87.0px;width:1280px;height:1px;background:#e4e4e4"></div><div style="left:0;top:111.0px;width:1280px;height:1px;background:#e4e4e4"></div><div style="left:0;top:135.0px;width:1280px;height:1px;background:#e4e4e4"></div><div style="left:0;top:159.0px;width:1280px;height:1px;background:#e4e4e4"></div><div style="left:0;top:183.0px;width:1280px;height:1px;background:#e4e4e4"></div><div style="left:0;top:207.0px;width:1280px;height:1px;background:#e4e4e4"></div><div style="left:0;top:231.0px;width:1280px;height:1px;background:#e4e4e4"></div><div style="left:414px;top:0;width:1px;height:220px;background:#e4e4e4"></div><div style="left:829px;top:0;width:1px;height:220px;background:#e4e4e4"></div><div style="left:1244px;top:0;width:1px;height:220px;background:#e4e4e4"></div><div style="left:1280px;top:0;width:1px;height:220px;background:#e9e9e9"></div></div><div class="t" style="left:275.33px;top:139.1px;letter-spacing:0.102px;">Наименование</div><div class="t" style="left:710.63px;top:139.1px;letter-spacing:-0.135px;">Валюта типа обмена</div><div class="t" style="left:1105.03px;top:139.1px;letter-spacing:0.100px;">Родительский</div><div class="t" style="left:1520px;top:131px;width:29px;height:34px;overflow:hidden;text-align:center;line-height:16.600px">Обрат-<br>ный</div><div class="t" style="left:275.33px;top:170.9px;letter-spacing:-0.598px;">ЦБРФ (BYN)</div><div class="t" style="left:690.63px;top:170.9px;letter-spacing:0.031px;">Белорусский рубль</div>
<div class="t" style="left:275.33px;top:194.9px;letter-spacing:-0.422px;">ЦБРФ (UAH)</div><div class="t" style="left:689.83px;top:194.9px;letter-spacing:0.250px;">Гривна</div>
<div class="t" style="left:275.33px;top:218.9px;letter-spacing:-0.567px;">ЦБРФ (USD)</div><div class="t" style="left:690.80px;top:218.9px;letter-spacing:-0.254px;">Доллар США</div>
<div class="t" style="left:275.33px;top:242.9px;letter-spacing:-0.767px;">ЦБРФ (EUR)</div><div class="t" style="left:690.63px;top:242.9px;letter-spacing:-0.475px;">Евро</div>
<div class="t" style="left:275.33px;top:266.9px;letter-spacing:-0.527px;">ЦБРФ (PLN)</div><div class="t" style="left:691.27px;top:266.9px;letter-spacing:-0.312px;">Злотый</div>
<div class="t" style="left:275.33px;top:290.9px;letter-spacing:-0.567px;">ЦБРФ (CNY)</div><div class="t" style="left:690.63px;top:290.9px;letter-spacing:0.139px;">Китайский юань</div>
<div class="t" style="left:275.33px;top:314.9px;letter-spacing:-0.678px;">ЦБРФ (RUB)</div><div class="t" style="left:690.63px;top:314.9px;letter-spacing:0.065px;">Российский рубль</div>
<div class="btn" style="left:1208.3px;top:348.2px;width:109.4px;height:22.5px;"></div><div class="t" style="left:1243.80px;top:352.7px;">Добавить</div>
<div class="btn" style="left:1322.3px;top:348.2px;width:141.4px;height:22.5px;"></div><div class="t" style="left:1358.83px;top:352.7px;letter-spacing:-0.125px;">Редактировать</div>
<div class="btn" style="left:1469.3px;top:348.2px;width:99.5px;height:22.5px;"></div><div class="t" style="left:1505.25px;top:352.7px;letter-spacing:-0.342px;">Удалить</div>
<div class="hl" style="left:272px;top:377px;width:116px;height:24px;border:1px solid #cfd6d9;border-radius:3px 3px 0 0"></div><div style="left:392px;top:377px;width:115.5px;height:24px;border:1px solid #d6d6d6;border-radius:3px 3px 0 0;background:#f4f4f4"></div><div class="t" style="left:284.41px;top:381.3px;letter-spacing:0.072px;">Текущие курсы</div><div class="t" style="left:403.63px;top:381.3px;letter-spacing:0.264px;">Импорт курсов</div><div style="left:342px;top:411px;width:675px;height:1px;background:#d2d2d2"></div><div style="left:270.5px;top:411px;width:2.5px;height:1px;background:#d2d2d2"></div><div class="t g" style="left:295.33px;top:406.2px;letter-spacing:-0.464px;">Валюта</div><div style="left:1020px;top:401px;width:1px;height:381px;background:#dadada"></div><div style="left:271px;top:428px;width:746px;height:314px;background:#fff;border:1px solid #c8c8c8;border-radius:4px;overflow:hidden"><svg style="left:0;top:0" width="744" height="312" viewBox="0 0 744 312"><rect x="0" y="0" width="730" height="21.400" fill="#f2f2f2"/><rect x="0" y="20.900" width="730" height="1" fill="#e0e0e0"/><rect x="0" y="42.400" width="730" height="23.100" fill="#d5e5ea"/><rect x="0" y="87.32" width="730" height="1" fill="#e3e3e3"/><rect x="0" y="109.74" width="730" height="1" fill="#e3e3e3"/><rect x="0" y="132.16" width="730" height="1" fill="#e3e3e3"/><rect x="0" y="154.58" width="730" height="1" fill="#e3e3e3"/><rect x="0" y="177.00" width="730" height="1" fill="#e3e3e3"/><rect x="0" y="199.42" width="730" height="1" fill="#e3e3e3"/><rect x="0" y="221.84" width="730" height="1" fill="#e3e3e3"/><rect x="0" y="244.26" width="730" height="1" fill="#e3e3e3"/><rect x="0" y="266.68" width="730" height="1" fill="#e3e3e3"/><rect x="0" y="289.10" width="730" height="1" fill="#e3e3e3"/><rect x="516" y="0" width="1" height="313" fill="#e3e3e3"/><rect x="729" y="0" width="16" height="313" fill="#fff"/><rect x="728" y="0" width="1" height="313" fill="#ebebeb"/></svg></div><div class="t" style="left:295.33px;top:433.0px;letter-spacing:0.075px;">Наименование</div><div class="t" style="left:863.61px;top:433.0px;letter-spacing:0.149px;">Текущий курс обмена</div><div class="t" style="left:275.43px;top:453.9px;letter-spacing:0.191px;">Норвежская крона</div>
<div class="t" style="left:275.43px;top:476.3px;letter-spacing:0.098px;">Российский рубль</div>
<div class="t" style="left:275.43px;top:498.7px;letter-spacing:0.032px;">Румынский лей</div>
<div class="t" style="left:275.84px;top:521.1px;letter-spacing:-1.066px;">СДР</div>
<div class="t" style="left:275.84px;top:543.5px;letter-spacing:0.021px;">Сингапурский доллар</div>
<div class="t" style="left:275.84px;top:565.9px;letter-spacing:-0.450px;">Сом</div>
<div class="t" style="left:275.84px;top:588.3px;letter-spacing:-0.462px;">Сум</div>
<div class="t" style="left:275.41px;top:610.7px;letter-spacing:-0.034px;">Тенге</div>
<div class="t" style="left:275.41px;top:633.1px;letter-spacing:-0.045px;">Турецкая лира</div>
<div class="t" style="left:275.75px;top:655.5px;letter-spacing:0.025px;">Фунт стерлингов</div>
<div class="t" style="left:275.48px;top:677.9px;letter-spacing:0.048px;">Чешская крона</div>
<div class="t" style="left:275.43px;top:700.3px;letter-spacing:0.065px;">Шведская крона</div>
<div class="t" style="left:275.43px;top:722.7px;letter-spacing:0.124px;">Швейцарский франк</div>
<div class="t" style="left:923.79px;top:476.3px;letter-spacing:-0.333px;">0,037176656</div><div style="left:269px;top:774px;width:751px;height:1px;background:#d6d6d6"></div><div class="t" style="left:563.73px;top:749.8px;letter-spacing:-0.272px;">Есть курс (F11)</div><div class="btn" style="left:655.7px;top:746.3px;width:110.3px;height:23.7px;"></div><div class="t" style="left:691.80px;top:750.9px;letter-spacing:-0.061px;">Добавить</div>
<div class="btn" style="left:770.2px;top:746.3px;width:141.7px;height:23.7px;"></div><div class="t" style="left:806.43px;top:750.9px;letter-spacing:-0.100px;">Редактировать</div>
<div class="btn" style="left:916.1px;top:746.3px;width:100.8px;height:23.7px;"></div><div class="t" style="left:953.35px;top:750.9px;letter-spacing:-0.475px;">Удалить</div>
<div style="left:1080px;top:411px;width:488px;height:1px;background:#d2d2d2"></div><div class="t g" style="left:1049.90px;top:406.2px;letter-spacing:-0.464px;">Дата</div><div style="left:1026px;top:428px;width:543px;height:314px;background:#fff;border:1px solid #c8c8c8;border-radius:4px;overflow:hidden"><svg style="left:0;top:0" width="541" height="312" viewBox="0 0 541 312"><rect x="0" y="0" width="525" height="38.200" fill="#f2f2f2"/><rect x="0" y="37.700" width="525" height="1" fill="#e0e0e0"/><rect x="0" y="288.44" width="525" height="30" fill="#d5e5ea"/><rect x="0" y="60.54" width="525" height="1" fill="#e3e3e3"/><rect x="0" y="83.28" width="525" height="1" fill="#e3e3e3"/><rect x="0" y="106.02" width="525" height="1" fill="#e3e3e3"/><rect x="0" y="128.76" width="525" height="1" fill="#e3e3e3"/><rect x="0" y="151.50" width="525" height="1" fill="#e3e3e3"/><rect x="0" y="174.24" width="525" height="1" fill="#e3e3e3"/><rect x="0" y="196.98" width="525" height="1" fill="#e3e3e3"/><rect x="0" y="219.72" width="525" height="1" fill="#e3e3e3"/><rect x="0" y="242.46" width="525" height="1" fill="#e3e3e3"/><rect x="0" y="265.20" width="525" height="1" fill="#e3e3e3"/><rect x="55" y="0" width="1" height="313" fill="#e3e3e3"/><rect x="476" y="0" width="1" height="313" fill="#e3e3e3"/><rect x="525" y="0" width="1" height="313" fill="#ebebeb"/><rect x="478.8" y="41.00" width="44.600" height="17.500" rx="4" fill="#fff" stroke="#c4c4c4" stroke-width="1"/><path d="M495.2 49.70h12" stroke="#8a8a8a" stroke-width="2" fill="none"/><rect x="478.8" y="63.74" width="44.600" height="17.500" rx="4" fill="#fff" stroke="#c4c4c4" stroke-width="1"/><path d="M495.2 72.44h12" stroke="#8a8a8a" stroke-width="2" fill="none"/><rect x="478.8" y="86.48" width="44.600" height="17.500" rx="4" fill="#fff" stroke="#c4c4c4" stroke-width="1"/><path d="M495.2 95.18h12" stroke="#8a8a8a" stroke-width="2" fill="none"/><rect x="478.8" y="109.22" width="44.600" height="17.500" rx="4" fill="#fff" stroke="#c4c4c4" stroke-width="1"/><path d="M495.2 117.92h12" stroke="#8a8a8a" stroke-width="2" fill="none"/><rect x="478.8" y="131.96" width="44.600" height="17.500" rx="4" fill="#fff" stroke="#c4c4c4" stroke-width="1"/><path d="M495.2 140.66h12" stroke="#8a8a8a" stroke-width="2" fill="none"/><rect x="478.8" y="154.70" width="44.600" height="17.500" rx="4" fill="#fff" stroke="#c4c4c4" stroke-width="1"/><path d="M495.2 163.40h12" stroke="#8a8a8a" stroke-width="2" fill="none"/><rect x="478.8" y="177.44" width="44.600" height="17.500" rx="4" fill="#fff" stroke="#c4c4c4" stroke-width="1"/><path d="M495.2 186.14h12" stroke="#8a8a8a" stroke-width="2" fill="none"/><rect x="478.8" y="200.18" width="44.600" height="17.500" rx="4" fill="#fff" stroke="#c4c4c4" stroke-width="1"/><path d="M495.2 208.88h12" stroke="#8a8a8a" stroke-width="2" fill="none"/><rect x="478.8" y="222.92" width="44.600" height="17.500" rx="4" fill="#fff" stroke="#c4c4c4" stroke-width="1"/><path d="M495.2 231.62h12" stroke="#8a8a8a" stroke-width="2" fill="none"/><rect x="478.8" y="245.66" width="44.600" height="17.500" rx="4" fill="#fff" stroke="#c4c4c4" stroke-width="1"/><path d="M495.2 254.36h12" stroke="#8a8a8a" stroke-width="2" fill="none"/><rect x="478.8" y="268.40" width="44.600" height="17.500" rx="4" fill="#fff" stroke="#c4c4c4" stroke-width="1"/><path d="M495.2 277.10h12" stroke="#8a8a8a" stroke-width="2" fill="none"/><rect x="478.8" y="291.14" width="44.600" height="17.500" rx="4" fill="#fff" stroke="#c4c4c4" stroke-width="1"/><path d="M495.2 299.84h12" stroke="#8a8a8a" stroke-width="2" fill="none"/></svg></div><div class="t" style="left:1030.10px;top:441.0px;letter-spacing:-0.430px;">Дата</div><div class="t" style="left:1422.13px;top:440.9px;letter-spacing:0.103px;">Курс обмена</div><div class="t" style="left:1504px;top:432.3px;width:48px;height:34px;text-align:center;line-height:17.200px">Уда-<br>лить</div><div class="t" style="left:1030.35px;top:471.8px;letter-spacing:-0.411px;">26.03.26</div><div class="t" style="left:1425.69px;top:471.8px;letter-spacing:-0.226px;">0,035791365</div>
<div class="t" style="left:1030.35px;top:494.6px;letter-spacing:-0.411px;">28.03.26</div><div class="t" style="left:1418.99px;top:494.6px;letter-spacing:-0.251px;">0,0362450163</div>
<div class="t" style="left:1030.35px;top:517.4px;letter-spacing:-0.411px;">29.03.26</div><div class="t" style="left:1418.99px;top:517.4px;letter-spacing:-0.253px;">0,0359240565</div>
<div class="t" style="left:1030.49px;top:540.2px;letter-spacing:-0.432px;">01.04.26</div><div class="t" style="left:1425.69px;top:540.2px;letter-spacing:-0.223px;">0,035940583</div>
<div class="t" style="left:1030.49px;top:563.0px;letter-spacing:-0.432px;">02.04.26</div><div class="t" style="left:1418.99px;top:563.0px;letter-spacing:-0.247px;">0,0366046949</div>
<div class="t" style="left:1030.49px;top:585.8px;letter-spacing:-0.432px;">03.04.26</div><div class="t" style="left:1418.99px;top:585.8px;letter-spacing:-0.244px;">0,0382423802</div>
<div class="t" style="left:1030.49px;top:608.6px;letter-spacing:-0.432px;">04.04.26</div><div class="t" style="left:1418.99px;top:608.6px;letter-spacing:-0.245px;">0,0371867481</div>
<div class="t" style="left:1030.49px;top:631.4px;letter-spacing:-0.432px;">05.04.26</div><div class="t" style="left:1418.99px;top:631.4px;letter-spacing:-0.247px;">0,0366726199</div>
<div class="t" style="left:1030.49px;top:654.2px;letter-spacing:-0.432px;">08.04.26</div><div class="t" style="left:1418.99px;top:654.2px;letter-spacing:-0.268px;">0,0368226474</div>
<div class="t" style="left:1030.49px;top:677.0px;letter-spacing:-0.432px;">09.04.26</div><div class="t" style="left:1418.99px;top:677.0px;letter-spacing:-0.251px;">0,0366132723</div>
<div class="t" style="left:1030.01px;top:699.8px;letter-spacing:-0.363px;">10.04.26</div><div class="t" style="left:1418.99px;top:699.8px;letter-spacing:-0.251px;">0,0364505876</div>
<div class="t" style="left:1030.01px;top:722.6px;letter-spacing:-0.225px;">11.04.26</div><div class="t" style="left:1418.99px;top:722.6px;letter-spacing:-0.268px;">0,0372205204</div>
<div class="btn" style="left:1478.3px;top:746.3px;width:90.5px;height:23.7px;"></div><div class="t" style="left:1495.10px;top:751.2px;">Добавить</div>
<div class="btn" style="left:271.3px;top:779.4px;width:45.7px;height:23.3px;"></div>
<div class="btn" style="left:1106.2px;top:779.3px;width:45.8px;height:23.3px;"></div>
<div class="btn" style="left:1156.3px;top:779.3px;width:116.0px;height:23.3px;"></div><div class="t dis" style="left:1192.34px;top:784.3px;letter-spacing:-0.163px;">Сохранить</div>
<div class="btn" style="left:1277.3px;top:779.3px;width:110.5px;height:23.3px;"></div><div class="t dis" style="left:1313.58px;top:784.3px;letter-spacing:-0.265px;">Отменить</div>
<div class="btn" style="left:1393.3px;top:779.3px;width:69.5px;height:23.3px;"></div><div class="t" style="left:1428.48px;top:784.3px;">OK</div>
<div class="btn" style="left:1467.4px;top:779.3px;width:101.4px;height:23.3px;"></div><div class="t" style="left:1504.27px;top:784.3px;letter-spacing:-0.269px;">Закрыть</div>
<svg class="ov" width="1579" height="807" viewBox="0 0 1579 807"><rect x="284.6" y="79.29999999999998" width="12.3" height="7.3999999999999995" rx="1.300" fill="none" stroke="#3c3c3c" stroke-width="1.150"/><path d="M284 78.69999999999999h2.2a2.2 2.2 0 0 1 -2.2 2.2zM297.5 78.69999999999999v2.2a2.2 2.2 0 0 1 -2.2 -2.2zM297.5 87.29999999999998h-2.2a2.2 2.2 0 0 1 2.2 -2.2zM284 87.29999999999998v-2.2a2.2 2.2 0 0 1 2.2 2.2z" fill="#000"/><circle cx="290.75" cy="82.99999999999999" r="1.900" fill="#000"/><path d="M387.300 79.200l6.600 6.600M393.900 79.200l-6.600 6.600" stroke="#8a8a8a" stroke-width="1" fill="none"/><path d="M1516.800 89.700l1.300-4.500 11.300-11.300a1.300 1.300 0 0 1 1.800 0l2.600 2.600a1.300 1.300 0 0 1 0 1.800l-11.300 11.300zM1518.300 85.400l3 3" fill="none" stroke="#4d4d4d" stroke-width="1.200" stroke-linejoin="round"/><path d="M1526.500 76.700l3.300 3.300" stroke="#4fc1ee" stroke-width="1.200" fill="none"/><path d="M1548 78v-4.400h4.600M1564.800 85.400v4.400h-4.600" fill="none" stroke="#333" stroke-width="1.300"/><path d="M1560.200 73.600h4.600v4.400M1552.600 89.800h-4.600v-4.400" fill="none" stroke="#4fc1ee" stroke-width="1.300"/><circle cx="284" cy="109.8" r="4.500" fill="none" stroke="#b2b2b2" stroke-width="1.300"/><path d="M281.4 109.8h5.200" stroke="#b2b2b2" stroke-width="1.300"/><circle cx="697" cy="146" r="6" fill="#f7fbfd" stroke="#4fc1ee" stroke-width="1.500"/><path d="M694.1 144.8l2.900 2.900 2.900-2.900" fill="none" stroke="#666" stroke-width="1.500" stroke-linecap="round" stroke-linejoin="round"/><rect x="1528.800" y="170.90" width="11.500" height="11.300" rx="2.300" fill="#fff" stroke="#707070" stroke-width="1.200"/><rect x="1528.800" y="195.05" width="11.500" height="11.300" rx="2.300" fill="#fff" stroke="#707070" stroke-width="1.200"/><rect x="1528.800" y="219.20" width="11.500" height="11.300" rx="2.300" fill="#fff" stroke="#707070" stroke-width="1.200"/><rect x="1528.800" y="243.35" width="11.500" height="11.300" rx="2.300" fill="#fff" stroke="#707070" stroke-width="1.200"/><rect x="1528.800" y="267.50" width="11.500" height="11.300" rx="2.300" fill="#fff" stroke="#707070" stroke-width="1.200"/><rect x="1528.800" y="291.65" width="11.500" height="11.300" rx="2.300" fill="#fff" stroke="#707070" stroke-width="1.200"/><rect x="1528.800" y="315.80" width="11.500" height="11.300" rx="2.300" fill="#fff" stroke="#707070" stroke-width="1.200"/><path d="M1528.800 342v-.6a2.300 2.300 0 0 1 2.300-2.300h6.900a2.300 2.300 0 0 1 2.300 2.300v.6" fill="#fff" stroke="#707070" stroke-width="1.200"/><path d="M1556 137.200l4.500-4.800 4.500 4.800z" fill="#d7d7d7"/><rect x="1556" y="143.800" width="9" height="152" rx="4.500" fill="#d9d9d9"/><path d="M1556 329.800l4.500 4.800 4.500-4.800z" fill="#d7d7d7"/><rect x="272.2" y="347" width="29.7" height="24.5" rx="4.500" fill="#d5e5ea"/><rect x="278.5" y="352.6" width="3" height="3" rx=".9" fill="none" stroke="#4fc1ee" stroke-width="1.100"/><path d="M285.1 354.1h9.500" stroke="#4a4a4a" stroke-width="1.250" fill="none" stroke-linecap="round"/><rect x="278.5" y="358.1" width="3" height="3" rx=".9" fill="none" stroke="#4fc1ee" stroke-width="1.100"/><path d="M285.1 359.6h9.500" stroke="#4a4a4a" stroke-width="1.250" fill="none" stroke-linecap="round"/><rect x="278.5" y="363.6" width="3" height="3" rx=".9" fill="none" stroke="#4fc1ee" stroke-width="1.100"/><path d="M285.1 365.1h9.500" stroke="#4a4a4a" stroke-width="1.250" fill="none" stroke-linecap="round"/><rect x="309.7" y="351.7" width="15.600" height="15.5" fill="#f6f6f6"/><path d="M315.2 351.7v15.5M320.4 351.7v15.5M309.7 356.89h15.600M309.7 362.16h15.600" stroke="#4fc1ee" stroke-width="1.600" fill="none"/><rect x="309.7" y="351.7" width="15.600" height="15.5" rx=".5" fill="none" stroke="#161616" stroke-width="1.250"/><g fill="none" stroke="#4a4a4a" stroke-width="1.25" stroke-linecap="round" stroke-linejoin="round"><path d="M344.8 353.6h15.400M349.2 362.2h6.600"/></g><g fill="none" stroke="#4fc1ee" stroke-width="1.500" stroke-linecap="round" stroke-linejoin="round"><path d="M347.0 357.9h11M351.4 366.5h2.200"/></g><g fill="none" stroke="#444" stroke-width="1.4" stroke-linecap="round" stroke-linejoin="round"><path d="M388.76 367.37L385.84 367.37L385.74 365.30L384.24 364.67L382.69 366.06L380.64 364.01L382.03 362.46L381.40 360.96L379.33 360.86L379.33 357.94L381.40 357.84L382.03 356.34L380.64 354.79L382.69 352.74L384.24 354.13L385.74 353.50L385.84 351.43L388.76 351.43L388.86 353.50L390.36 354.13L391.91 352.74L393.96 354.79L392.57 356.34L393.20 357.84L395.27 357.94L395.27 360.86L393.20 360.96L392.57 362.46L393.96 364.01L391.91 366.06L390.36 364.67L388.86 365.30z"/></g><circle cx="387.3" cy="359.4" r="2.700" fill="none" stroke="#6fcbf1" stroke-width="1.600"/><path d="M421.5 353.6h10" stroke="#4a4a4a" stroke-width="1.250" fill="none" stroke-linecap="round"/><text x="416.5" y="355.5" font-family="Liberation Sans, sans-serif" font-size="5.500" font-weight="bold" fill="#4fc1ee" text-anchor="middle">1</text><path d="M421.5 360.0h10" stroke="#4a4a4a" stroke-width="1.250" fill="none" stroke-linecap="round"/><text x="416.5" y="361.9" font-family="Liberation Sans, sans-serif" font-size="5.500" font-weight="bold" fill="#4fc1ee" text-anchor="middle">2</text><path d="M421.5 366.5h10" stroke="#4a4a4a" stroke-width="1.250" fill="none" stroke-linecap="round"/><text x="416.5" y="368.4" font-family="Liberation Sans, sans-serif" font-size="5.500" font-weight="bold" fill="#4fc1ee" text-anchor="middle">3</text><g fill="none" stroke="#4a4a4a" stroke-width="1.25" stroke-linecap="round" stroke-linejoin="round"><path d="M445.6 352.3h15.800M445.6 356.8h15.800M445.6 361.3h6.200M445.6 365.7h6.200"/></g><g fill="none" stroke="#4fc1ee" stroke-width="1.25" stroke-linecap="round" stroke-linejoin="round"><path d="M455.0 363.6h6.400M458.2 360.4v6.400"/></g><g fill="none" stroke="#4a4a4a" stroke-width="1.350" stroke-linecap="round" stroke-linejoin="round"><path d="M487.2 354.7h-4.400a2 2 0 0 0-2 2v8.200a2 2 0 0 0 2 2h9.600a2 2 0 0 0 2-2v-4.400"/></g><g fill="none" stroke="#4fc1ee" stroke-width="1.25" stroke-linecap="round" stroke-linejoin="round"><path d="M488.5 360.0l8.500-8.200M490.9 351.7h6.200v6.200"/></g><g fill="none" stroke="#2e2e2e" stroke-width="1.25" stroke-linecap="round" stroke-linejoin="miter"><path d="M517.4 364.3h-2v-9.700h11.700M524.1 351.4l3.200 3.200-3.200 3.200"/></g><g fill="none" stroke="#4fc1ee" stroke-width="1.25" stroke-linecap="round" stroke-linejoin="miter"><path d="M530.5 354.6h2v9.800h-11M524.6 361.2l-3.200 3.200 3.200 3.200"/></g><path d="M1225.1000000000001 359.6h10.600M1230.4 354.3v10.600" stroke="#575757" stroke-width="1.900" fill="none"/><path d="M1340.8 363.3l.9-3.300 6.400-6.200a1.200 1.200 0 0 1 1.700 0l.9 .9a1.200 1.200 0 0 1 0 1.700l-6.400 6.200z" fill="none" stroke="#4a4a4a" stroke-width="1.500" stroke-linejoin="round"/><path d="M1339.3 365.3h12" stroke="#4fc1ee" stroke-width="1.200" fill="none"/><path d="M1485.8999999999999 359.6h11.4" stroke="#777" stroke-width="2" fill="none"/><circle cx="283.9" cy="412.2" r="4.500" fill="none" stroke="#b2b2b2" stroke-width="1.300"/><path d="M281.29999999999995 412.2h5.200" stroke="#b2b2b2" stroke-width="1.300"/><circle cx="281.9" cy="440.3" r="6" fill="#f7fbfd" stroke="#4fc1ee" stroke-width="1.500"/><path d="M279.0 439.1l2.900 2.900 2.900-2.900" fill="none" stroke="#666" stroke-width="1.500" stroke-linecap="round" stroke-linejoin="round"/><path d="M1004 440.400l4.500-4.800 4.500 4.800z" fill="#d7d7d7"/><rect x="1004.200" y="605.700" width="8.800" height="117.300" rx="4.400" fill="#d9d9d9"/><path d="M1004 729.600l4.500 4.800 4.500-4.800z" fill="#d7d7d7"/><rect x="271.1" y="746.2" width="30.8" height="23.6" rx="4.500" fill="#d5e5ea"/><rect x="278.3" y="751.2" width="3" height="3" rx=".9" fill="none" stroke="#4fc1ee" stroke-width="1.100"/><path d="M284.9 752.7h9.500" stroke="#4a4a4a" stroke-width="1.250" fill="none" stroke-linecap="round"/><rect x="278.3" y="756.7" width="3" height="3" rx=".9" fill="none" stroke="#4fc1ee" stroke-width="1.100"/><path d="M284.9 758.2h9.500" stroke="#4a4a4a" stroke-width="1.250" fill="none" stroke-linecap="round"/><rect x="278.3" y="762.2" width="3" height="3" rx=".9" fill="none" stroke="#4fc1ee" stroke-width="1.100"/><path d="M284.9 763.7h9.500" stroke="#4a4a4a" stroke-width="1.250" fill="none" stroke-linecap="round"/><rect x="309.5" y="749.5" width="15.600" height="16.3" fill="#f6f6f6"/><path d="M315 749.5v16.3M320.2 749.5v16.3M309.5 754.96h15.600M309.5 760.5h15.600" stroke="#4fc1ee" stroke-width="1.600" fill="none"/><rect x="309.5" y="749.5" width="15.600" height="16.3" rx=".5" fill="none" stroke="#161616" stroke-width="1.250"/><g fill="none" stroke="#4a4a4a" stroke-width="1.25" stroke-linecap="round" stroke-linejoin="round"><path d="M344.6 752.2h15.400M349 760.8h6.600"/></g><g fill="none" stroke="#4fc1ee" stroke-width="1.500" stroke-linecap="round" stroke-linejoin="round"><path d="M346.8 756.5h11M351.2 765.1h2.200"/></g><g fill="none" stroke="#444" stroke-width="1.4" stroke-linecap="round" stroke-linejoin="round"><path d="M388.56 765.97L385.64 765.97L385.54 763.90L384.04 763.27L382.49 764.66L380.44 762.61L381.83 761.06L381.20 759.56L379.13 759.46L379.13 756.54L381.20 756.44L381.83 754.94L380.44 753.39L382.49 751.34L384.04 752.73L385.54 752.10L385.64 750.03L388.56 750.03L388.66 752.10L390.16 752.73L391.71 751.34L393.76 753.39L392.37 754.94L393.00 756.44L395.07 756.54L395.07 759.46L393.00 759.56L392.37 761.06L393.76 762.61L391.71 764.66L390.16 763.27L388.66 763.90z"/></g><circle cx="387.1" cy="758.0" r="2.700" fill="none" stroke="#6fcbf1" stroke-width="1.600"/><path d="M421.3 752.2h10" stroke="#4a4a4a" stroke-width="1.250" fill="none" stroke-linecap="round"/><text x="416.3" y="754.1" font-family="Liberation Sans, sans-serif" font-size="5.500" font-weight="bold" fill="#4fc1ee" text-anchor="middle">1</text><path d="M421.3 758.6h10" stroke="#4a4a4a" stroke-width="1.250" fill="none" stroke-linecap="round"/><text x="416.3" y="760.5" font-family="Liberation Sans, sans-serif" font-size="5.500" font-weight="bold" fill="#4fc1ee" text-anchor="middle">2</text><path d="M421.3 765.1h10" stroke="#4a4a4a" stroke-width="1.250" fill="none" stroke-linecap="round"/><text x="416.3" y="767.0" font-family="Liberation Sans, sans-serif" font-size="5.500" font-weight="bold" fill="#4fc1ee" text-anchor="middle">3</text><g fill="none" stroke="#4a4a4a" stroke-width="1.25" stroke-linecap="round" stroke-linejoin="round"><path d="M445.4 750.9h15.800M445.4 755.4h15.800M445.4 759.9h6.200M445.4 764.3h6.200"/></g><g fill="none" stroke="#4fc1ee" stroke-width="1.25" stroke-linecap="round" stroke-linejoin="round"><path d="M454.8 762.2h6.400M458 759.0v6.400"/></g><g fill="none" stroke="#4a4a4a" stroke-width="1.350" stroke-linecap="round" stroke-linejoin="round"><path d="M487 753.3h-4.400a2 2 0 0 0-2 2v8.200a2 2 0 0 0 2 2h9.600a2 2 0 0 0 2-2v-4.400"/></g><g fill="none" stroke="#4fc1ee" stroke-width="1.25" stroke-linecap="round" stroke-linejoin="round"><path d="M488.3 758.6l8.500-8.200M490.7 750.3h6.200v6.200"/></g><g fill="none" stroke="#2e2e2e" stroke-width="1.25" stroke-linecap="round" stroke-linejoin="miter"><path d="M517.2 762.9h-2v-9.700h11.700M523.9 750.0l3.200 3.200-3.200 3.200"/></g><g fill="none" stroke="#4fc1ee" stroke-width="1.25" stroke-linecap="round" stroke-linejoin="miter"><path d="M530.3 753.2h2v9.800h-11M524.4 759.8l-3.200 3.200 3.200 3.200"/></g><rect x="544.600" y="751.600" width="10.700" height="10.700" rx="2.300" fill="#fff" stroke="#707070" stroke-width="1.200"/><path d="M673.0 757.7h10.600M678.3 752.4000000000001v10.600" stroke="#575757" stroke-width="1.900" fill="none"/><path d="M788.9 761.4l.9-3.300 6.400-6.200a1.200 1.200 0 0 1 1.700 0l.9 .9a1.200 1.200 0 0 1 0 1.700l-6.400 6.200z" fill="none" stroke="#4a4a4a" stroke-width="1.500" stroke-linejoin="round"/><path d="M787.4 763.4h12" stroke="#4fc1ee" stroke-width="1.200" fill="none"/><path d="M933.5999999999999 757.7h11.4" stroke="#777" stroke-width="2" fill="none"/><circle cx="1038.4" cy="412.2" r="4.500" fill="none" stroke="#b2b2b2" stroke-width="1.300"/><path d="M1035.8000000000002 412.2h5.200" stroke="#b2b2b2" stroke-width="1.300"/><path d="M1503 461.400v5.600h-5.600zM1552 461.400v5.600h-5.600z" fill="#1c84bc"/><path d="M1556 440.400l4.500-4.800 4.500 4.800z" fill="#d7d7d7"/><rect x="1556" y="676" width="9" height="47" rx="4.500" fill="#d9d9d9"/><path d="M1556 729.600l4.500 4.800 4.500-4.800z" fill="#d7d7d7"/><rect x="1026.8" y="746.2" width="30.3" height="23.6" rx="4.500" fill="#d5e5ea"/><rect x="1033.1" y="751.2" width="3" height="3" rx=".9" fill="none" stroke="#4fc1ee" stroke-width="1.100"/><path d="M1039.7 752.7h9.500" stroke="#4a4a4a" stroke-width="1.250" fill="none" stroke-linecap="round"/><rect x="1033.1" y="756.7" width="3" height="3" rx=".9" fill="none" stroke="#4fc1ee" stroke-width="1.100"/><path d="M1039.7 758.2h9.500" stroke="#4a4a4a" stroke-width="1.250" fill="none" stroke-linecap="round"/><rect x="1033.1" y="762.2" width="3" height="3" rx=".9" fill="none" stroke="#4fc1ee" stroke-width="1.100"/><path d="M1039.7 763.7h9.500" stroke="#4a4a4a" stroke-width="1.250" fill="none" stroke-linecap="round"/><rect x="1064.3" y="749.5" width="15.600" height="16.3" fill="#f6f6f6"/><path d="M1069.8 749.5v16.3M1075.0 749.5v16.3M1064.3 754.96h15.600M1064.3 760.5h15.600" stroke="#4fc1ee" stroke-width="1.600" fill="none"/><rect x="1064.3" y="749.5" width="15.600" height="16.3" rx=".5" fill="none" stroke="#161616" stroke-width="1.250"/><g fill="none" stroke="#4a4a4a" stroke-width="1.25" stroke-linecap="round" stroke-linejoin="round"><path d="M1099.4 752.2h15.400M1103.8 760.8h6.600"/></g><g fill="none" stroke="#4fc1ee" stroke-width="1.500" stroke-linecap="round" stroke-linejoin="round"><path d="M1101.6 756.5h11M1106.0 765.1h2.200"/></g><g fill="none" stroke="#444" stroke-width="1.4" stroke-linecap="round" stroke-linejoin="round"><path d="M1143.36 765.97L1140.44 765.97L1140.34 763.90L1138.84 763.27L1137.29 764.66L1135.24 762.61L1136.63 761.06L1136.00 759.56L1133.93 759.46L1133.93 756.54L1136.00 756.44L1136.63 754.94L1135.24 753.39L1137.29 751.34L1138.84 752.73L1140.34 752.10L1140.44 750.03L1143.36 750.03L1143.46 752.10L1144.96 752.73L1146.51 751.34L1148.56 753.39L1147.17 754.94L1147.80 756.44L1149.87 756.54L1149.87 759.46L1147.80 759.56L1147.17 761.06L1148.56 762.61L1146.51 764.66L1144.96 763.27L1143.46 763.90z"/></g><circle cx="1141.9" cy="758.0" r="2.700" fill="none" stroke="#6fcbf1" stroke-width="1.600"/><path d="M1176.1 752.2h10" stroke="#4a4a4a" stroke-width="1.250" fill="none" stroke-linecap="round"/><text x="1171.1" y="754.1" font-family="Liberation Sans, sans-serif" font-size="5.500" font-weight="bold" fill="#4fc1ee" text-anchor="middle">1</text><path d="M1176.1 758.6h10" stroke="#4a4a4a" stroke-width="1.250" fill="none" stroke-linecap="round"/><text x="1171.1" y="760.5" font-family="Liberation Sans, sans-serif" font-size="5.500" font-weight="bold" fill="#4fc1ee" text-anchor="middle">2</text><path d="M1176.1 765.1h10" stroke="#4a4a4a" stroke-width="1.250" fill="none" stroke-linecap="round"/><text x="1171.1" y="767.0" font-family="Liberation Sans, sans-serif" font-size="5.500" font-weight="bold" fill="#4fc1ee" text-anchor="middle">3</text><g fill="none" stroke="#4a4a4a" stroke-width="1.25" stroke-linecap="round" stroke-linejoin="round"><path d="M1200.2 750.9h15.800M1200.2 755.4h15.800M1200.2 759.9h6.200M1200.2 764.3h6.200"/></g><g fill="none" stroke="#4fc1ee" stroke-width="1.25" stroke-linecap="round" stroke-linejoin="round"><path d="M1209.6 762.2h6.400M1212.8 759.0v6.400"/></g><g fill="none" stroke="#4a4a4a" stroke-width="1.350" stroke-linecap="round" stroke-linejoin="round"><path d="M1241.8 753.3h-4.400a2 2 0 0 0-2 2v8.200a2 2 0 0 0 2 2h9.600a2 2 0 0 0 2-2v-4.400"/></g><g fill="none" stroke="#4fc1ee" stroke-width="1.25" stroke-linecap="round" stroke-linejoin="round"><path d="M1243.1 758.6l8.500-8.200M1245.5 750.3h6.200v6.200"/></g><g fill="none" stroke="#2e2e2e" stroke-width="1.25" stroke-linecap="round" stroke-linejoin="miter"><path d="M1272.0 762.9h-2v-9.700h11.700M1278.7 750.0l3.200 3.200-3.200 3.200"/></g><g fill="none" stroke="#4fc1ee" stroke-width="1.25" stroke-linecap="round" stroke-linejoin="miter"><path d="M1285.1 753.2h2v9.800h-11M1279.2 759.8l-3.200 3.200 3.200 3.200"/></g><circle cx="294" cy="786.700" r="1.350" fill="#111"/><circle cx="294" cy="791.200" r="1.350" fill="#111"/><circle cx="294" cy="795.700" r="1.350" fill="#111"/><path d="M1123.300 789.800a6.200 6.200 0 0 1 10.800-3" fill="none" stroke="#2b2b2b" stroke-width="1.700" stroke-linecap="round"/><path d="M1135.600 783.300v4.600h-4.600z" fill="#2b2b2b"/><path d="M1134.700 792.200a6.200 6.200 0 0 1-10.800 3" fill="none" stroke="#4fc1ee" stroke-width="1.700" stroke-linecap="round"/><path d="M1122.400 798.700v-4.600h4.600z" fill="#4fc1ee"/><path d="M1172.800 784.200h7.900l3.600 3.600v8a1.800 1.800 0 0 1-1.800 1.800h-8a1.800 1.800 0 0 1-1.800-1.800v-9.800a1.800 1.800 0 0 1 1.800-1.800z" fill="none" stroke="#3a3a3a" stroke-width="1.600" stroke-linejoin="round"/><path d="M1172.200 797.400v-5.400h10.800v5.400" fill="none" stroke="#4fc1ee" stroke-width="1.500"/><path d="M1296.400 787.300v8.500a1.700 1.700 0 0 0 1.700 1.700h4.600a1.700 1.700 0 0 0 1.700-1.700v-8.500" fill="none" stroke="#333" stroke-width="1.700"/><path d="M1293.800 785.700h13.200M1298.200 785.400v-1a1 1 0 0 1 1-1h2.400a1 1 0 0 1 1 1v1" fill="none" stroke="#4fc1ee" stroke-width="1.400"/><path d="M1409.700 791.500l3.900 4.500 8-10.500" fill="none" stroke="#3a3a3a" stroke-width="1.700"/><path d="M1484.600 785.300l10.600 10.900M1495.200 785.300l-10.600 10.900" fill="none" stroke="#333" stroke-width="1.700"/></svg>
</main>
<!-- annotations -->
<section class="w">
<div class="red" style="left:269px;top:92px;width:1303px;height:285px;"></div><div class="red" style="left:257px;top:398px;width:768px;height:387px;"></div><div class="red" style="left:1025px;top:398px;width:547px;height:376px;"></div><svg class="ov" width="1579" height="807" viewBox="0 0 1579 807"><path d="M1141.700 291.700L1230 346.500" stroke="#f84040" stroke-width="4.600" stroke-linecap="round" fill="none"/><path d="M1238.300 352.500L1222 351L1229.800 338.300z" fill="#f84040"/><path d="M538.400 767.300C580 768.400 620 769.300 650.700 768.400" stroke="#f84040" stroke-width="4" stroke-linecap="round" fill="none"/></svg>
</section>
</body></html>
